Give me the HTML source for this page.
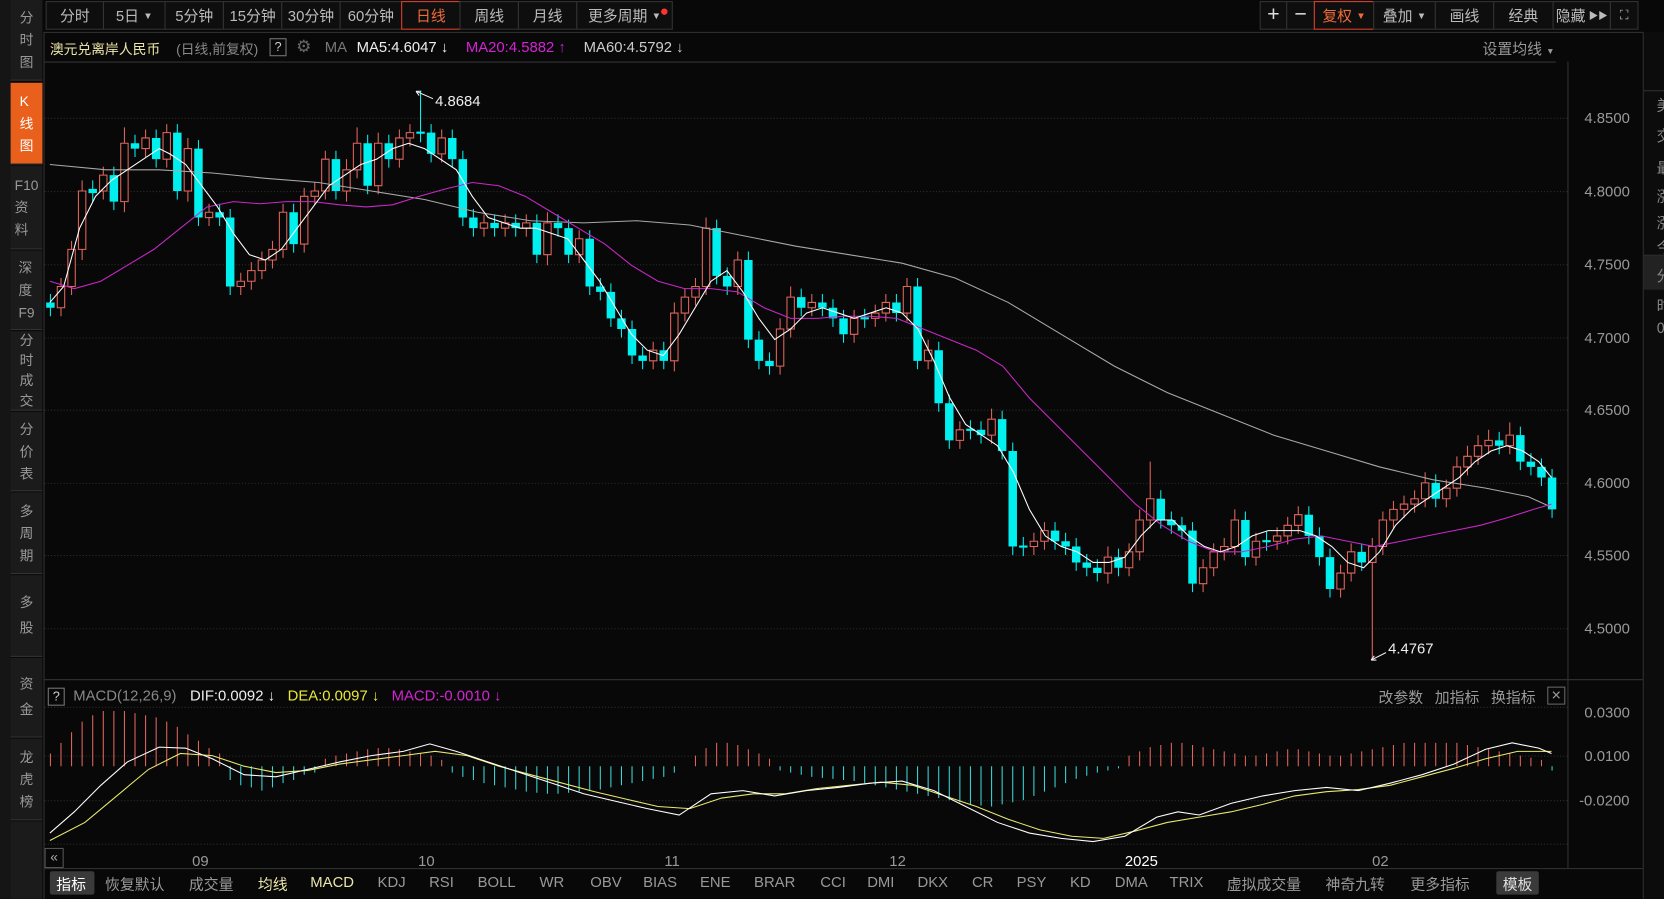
<!DOCTYPE html>
<html><head><meta charset="utf-8">
<style>
html,body{margin:0;padding:0;background:#000;width:1664px;height:899px;overflow:hidden}
#w{position:absolute;left:0;top:0;width:1568px;height:847px;transform:scale(1.06122);transform-origin:0 0;background:#080808;font-family:"Liberation Sans","Noto Sans CJK SC",sans-serif;color:#aaa;overflow:hidden}
.sb{position:absolute;left:0;top:0;width:10px;height:847px;background:#151515}
.side{position:absolute;left:10px;width:30px;background:#1b1b1b;border-bottom:1px solid #333;display:flex;flex-direction:column;align-items:center;justify-content:center;font-size:13px;line-height:21px;color:#999}
.side.on{background:#e8601c;color:#fff}
.tb{position:absolute;top:1px;height:27px;border:1px solid #333;background:#0e0e0e;color:#bbb;font-size:14px;display:flex;align-items:center;justify-content:center;box-sizing:border-box}
.tb.on{border-color:#e0402a;color:#f06a3a}
.t{position:absolute;white-space:nowrap;font-size:14px}
.ax{position:absolute;left:1493px;font-size:14px;color:#999}
.bt{position:absolute;top:823px;font-size:14px;color:#999;transform:translateX(-50%);white-space:nowrap}
</style></head><body>
<div id="w">
<div class="sb"></div>
<div class="side" style="top:0;height:75px">分<br>时<br>图</div>
<div class="side on" style="top:78px;height:76px">K<br>线<br>图</div>
<div class="side" style="top:156px;height:78px">F10<br>资<br>料</div>
<div class="side" style="top:236px;height:74px">深<br>度<br>F9</div>
<div class="side" style="top:312px;height:74px;line-height:19px">分<br>时<br>成<br>交</div>
<div class="side" style="top:388px;height:74px">分<br>价<br>表</div>
<div class="side" style="top:464px;height:76px">多<br>周<br>期</div>
<div class="side" style="top:542px;height:76px;line-height:24px">多<br>股</div>
<div class="side" style="top:620px;height:74px;line-height:24px">资<br>金</div>
<div class="side" style="top:696px;height:76px">龙<br>虎<br>榜</div>
<div class="side" style="top:774px;height:73px;border:none"></div>

<div class="tb" style="left:43px;width:55px">分时</div>
<div class="tb" style="left:97px;width:59px">5日 <span style="font-size:9px;margin-left:4px">▼</span></div>
<div class="tb" style="left:155px;width:56px">5分钟</div>
<div class="tb" style="left:210px;width:56px">15分钟</div>
<div class="tb" style="left:265px;width:56px">30分钟</div>
<div class="tb" style="left:320px;width:59px">60分钟</div>
<div class="tb on" style="left:378px;width:56px">日线</div>
<div class="tb" style="left:433px;width:56px">周线</div>
<div class="tb" style="left:488px;width:56px">月线</div>
<div class="tb" style="left:543px;width:91px">更多周期 <span style="font-size:9px;margin-left:4px">▼</span><span style="position:absolute;right:4px;top:6px;width:6px;height:6px;border-radius:3px;background:#f33"></span></div>

<div class="tb" style="left:1187px;width:26px;font-size:20px;color:#ddd">+</div>
<div class="tb" style="left:1212px;width:27px;font-size:20px;color:#ddd">−</div>
<div class="tb on" style="left:1238px;width:57px">复权 <span style="font-size:9px;margin-left:4px">▼</span></div>
<div class="tb" style="left:1294px;width:59px">叠加 <span style="font-size:9px;margin-left:4px">▼</span></div>
<div class="tb" style="left:1352px;width:56px">画线</div>
<div class="tb" style="left:1407px;width:57px">经典</div>
<div class="tb" style="left:1463px;width:55px">隐藏 <span style="font-size:9px;margin-left:3px">▶▶</span></div>
<div class="tb" style="left:1517px;width:27px;font-size:12px">⛶</div>

<div class="t" style="left:47px;top:36px;font-size:13px;color:#ece6a8">澳元兑离岸人民币</div>
<div class="t" style="left:166px;top:36px;font-size:13px;color:#888">(日线,前复权)</div>
<div class="t" style="left:254px;top:36px;width:14px;height:15px;border:1px solid #777;font-size:12px;color:#ccc;text-align:center;line-height:15px">?</div>
<div class="t" style="left:279px;top:34px;font-size:16px;color:#666">⚙</div>
<div class="t" style="left:306px;top:36px;font-size:14px;color:#777">MA</div>
<div class="t" style="left:336px;top:36px;font-size:14px;color:#eee">MA5:4.6047 ↓</div>
<div class="t" style="left:439px;top:36px;font-size:14px;color:#d324d3">MA20:4.5882 ↑</div>
<div class="t" style="left:550px;top:36px;font-size:14px;color:#ccc">MA60:4.5792 ↓</div>
<div class="t" style="left:1397px;top:36px;color:#999">设置均线 <span style="font-size:8px">▼</span></div>

<div class="ax" style="top:103px">4.8500</div>
<div class="ax" style="top:172px">4.8000</div>
<div class="ax" style="top:241px">4.7500</div>
<div class="ax" style="top:310px">4.7000</div>
<div class="ax" style="top:378px">4.6500</div>
<div class="ax" style="top:447px">4.6000</div>
<div class="ax" style="top:515px">4.5500</div>
<div class="ax" style="top:584px">4.5000</div>
<div class="ax" style="top:663px">0.0300</div>
<div class="ax" style="top:704px">0.0100</div>
<div class="ax" style="top:746px;left:1488px">-0.0200</div>

<div class="t" style="left:45px;top:648px;width:14px;height:15px;border:1px solid #777;font-size:12px;color:#ccc;text-align:center;line-height:15px">?</div>
<div class="t" style="left:69px;top:647px;color:#888">MACD(12,26,9)</div>
<div class="t" style="left:179px;top:647px;color:#eee">DIF:0.0092 ↓</div>
<div class="t" style="left:271px;top:647px;color:#e8e838">DEA:0.0097 ↓</div>
<div class="t" style="left:369px;top:647px;color:#d324d3">MACD:-0.0010 ↓</div>
<div class="t" style="left:1299px;top:647px;color:#999">改参数</div>
<div class="t" style="left:1352px;top:647px;color:#999">加指标</div>
<div class="t" style="left:1405px;top:647px;color:#999">换指标</div>
<div class="t" style="left:1458px;top:647px;width:15px;height:15px;border:1px solid #666;font-size:12px;color:#999;text-align:center;line-height:15px">✕</div>

<div class="t" style="left:42px;top:799px;width:16px;height:17px;border:1px solid #555;font-size:13px;line-height:16px;text-align:center;color:#aaa">«</div>
<div class="t" style="left:181px;top:803px;color:#999">09</div>
<div class="t" style="left:394px;top:803px;color:#999">10</div>
<div class="t" style="left:626px;top:803px;color:#999">11</div>
<div class="t" style="left:838px;top:803px;color:#999">12</div>
<div class="t" style="left:1060px;top:803px;color:#fff">2025</div>
<div class="t" style="left:1293px;top:803px;color:#999">02</div>

<div style="position:absolute;left:47px;top:821px;width:42px;height:22px;background:#3a3a3a;border-radius:2px"></div>
<div style="position:absolute;left:1410px;top:821px;width:40px;height:22px;background:#3a3a3a;border-radius:2px"></div>
<div class="bt" style="left:67px;color:#fff">指标</div>
<div class="bt" style="left:127px">恢复默认</div>
<div class="bt" style="left:199px">成交量</div>
<div class="bt" style="left:257px;color:#ece6a8">均线</div>
<div class="bt" style="left:313px;color:#ece6a8">MACD</div>
<div class="bt" style="left:369px">KDJ</div>
<div class="bt" style="left:416px">RSI</div>
<div class="bt" style="left:468px">BOLL</div>
<div class="bt" style="left:520px">WR</div>
<div class="bt" style="left:571px">OBV</div>
<div class="bt" style="left:622px">BIAS</div>
<div class="bt" style="left:674px">ENE</div>
<div class="bt" style="left:730px">BRAR</div>
<div class="bt" style="left:785px">CCI</div>
<div class="bt" style="left:830px">DMI</div>
<div class="bt" style="left:879px">DKX</div>
<div class="bt" style="left:926px">CR</div>
<div class="bt" style="left:972px">PSY</div>
<div class="bt" style="left:1018px">KD</div>
<div class="bt" style="left:1066px">DMA</div>
<div class="bt" style="left:1118px">TRIX</div>
<div class="bt" style="left:1191px">虚拟成交量</div>
<div class="bt" style="left:1277px">神奇九转</div>
<div class="bt" style="left:1357px">更多指标</div>
<div class="bt" style="left:1430px;color:#ddd">模板</div>

<svg width="1568" height="847" style="position:absolute;left:0;top:0" xmlns="http://www.w3.org/2000/svg">
<g stroke="#333" stroke-width="1" fill="none">
<line x1="42" y1="30.5" x2="1548" y2="30.5"/>
<line x1="42" y1="58.5" x2="1466" y2="58.5"/>
<line x1="42" y1="640.5" x2="1548" y2="640.5"/>
<line x1="42" y1="818.5" x2="1548" y2="818.5"/>
<line x1="1477.5" y1="58" x2="1477.5" y2="818"/>
<line x1="1548.5" y1="30" x2="1548.5" y2="847"/>
<line x1="41.5" y1="30" x2="41.5" y2="847"/>
</g>
<g stroke="#2e2e2e" stroke-dasharray="1,2" stroke-width="1">
<line x1="42" y1="111.5" x2="1477" y2="111.5"/><line x1="42" y1="180.5" x2="1477" y2="180.5"/>
<line x1="42" y1="249.5" x2="1477" y2="249.5"/><line x1="42" y1="318.5" x2="1477" y2="318.5"/>
<line x1="42" y1="386.5" x2="1477" y2="386.5"/><line x1="42" y1="455.5" x2="1477" y2="455.5"/>
<line x1="42" y1="523.5" x2="1477" y2="523.5"/><line x1="42" y1="592.5" x2="1477" y2="592.5"/>
<line x1="42" y1="666.5" x2="1477" y2="666.5"/><line x1="42" y1="712.5" x2="1477" y2="712.5"/>
<line x1="42" y1="754.5" x2="1477" y2="754.5"/><line x1="42" y1="795.5" x2="1477" y2="795.5"/>
</g>
<rect x="1549" y="30" width="19" height="817" fill="#0c0c0c"/>
<line x1="1549" y1="85.5" x2="1568" y2="85.5" stroke="#333"/>
<line x1="1549" y1="240.5" x2="1568" y2="240.5" stroke="#333"/>
<rect x="1549" y="241" width="19" height="32" fill="#222"/>
<g fill="#888" font-size="14" font-family="Noto Sans CJK SC,sans-serif">
<text x="1561" y="104">美</text><text x="1561" y="133">交</text><text x="1561" y="163">最</text><text x="1561" y="190">涨</text><text x="1561" y="215">涨</text><text x="1561" y="238">今</text><text x="1561" y="265">分</text><text x="1561" y="293">时</text><text x="1561" y="314">0</text>
</g>

<g transform="translate(47.5 0) scale(0.9965 1)" stroke-width="1">
<!-- MACD histogram -->
<path fill="none" stroke="#e2655c" d="M0 722V710M10 722V700M20 722V690M30 722V680M40 722V674M50 722V670M60 722V670M70 722V670M80 722V672M90 722V674M100 722V676M110 722V680M120 722V685M130 722V692M140 722V698M150 722V705M160 722V710M260 722V715M270 722V712M280 722V710M290 722V708M300 722V706M310 722V705M320 722V705M330 722V706M340 722V708M350 722V710M360 722V712M370 722V716M610 722V712M620 722V705M630 722V700M640 722V700M650 722V702M660 722V706M670 722V710M680 722V715M1020 722V712M1030 722V708M1040 722V704M1050 722V702M1060 722V700M1070 722V700M1080 722V702M1090 722V704M1100 722V706M1110 722V708M1120 722V710M1130 722V712M1140 722V712M1150 722V710M1160 722V708M1170 722V706M1180 722V706M1190 722V708M1200 722V710M1210 722V712M1220 722V712M1230 722V710M1240 722V708M1250 722V706M1260 722V704M1270 722V702M1280 722V700M1290 722V700M1300 722V700M1310 722V700M1320 722V700M1330 722V700M1340 722V702M1350 722V704M1360 722V706M1370 722V708M1380 722V710M1390 722V712M1400 722V714M1410 722V716"/>
<path fill="none" stroke="#3ad6d6" d="M170 722V735M180 722V740M190 722V742M200 722V745M210 722V742M220 722V738M230 722V735M240 722V730M250 722V728M380 722V728M390 722V732M400 722V735M410 722V738M420 722V740M430 722V742M440 722V744M450 722V746M460 722V747M470 722V748M480 722V748M490 722V747M500 722V746M510 722V745M520 722V744M530 722V742M540 722V740M550 722V738M560 722V736M570 722V734M580 722V732M590 722V728M690 722V726M700 722V728M710 722V730M720 722V732M730 722V733M740 722V734M750 722V735M760 722V736M770 722V738M780 722V740M790 722V742M800 722V744M810 722V746M820 722V748M830 722V750M840 722V752M850 722V754M860 722V756M870 722V758M880 722V759M890 722V760M900 722V758M910 722V756M920 722V754M930 722V750M940 722V746M950 722V742M960 722V738M970 722V734M980 722V731M990 722V728M1000 722V726M1010 722V724M1420 722V726"/>

<!-- wicks -->
<path fill="none" stroke="#e2655c" d="M10 262V298M20 227V278M30 170V245M50 157V188M70 120V200M90 122V148M110 117V158M130 130V190M150 192V213M180 257V278M190 247V273M200 237V263M210 227V253M220 192V243M240 177V238M250 172V193M260 142V188M280 150V190M290 120V168M310 125V183M330 122V158M340 117V138M370 122V153M410 202V223M430 202V223M450 202V223M470 200V250M500 217V248M570 322V348M590 285V350M600 272V303M610 262V288M620 205V278M650 237V278M690 300V353M700 270V318M720 277V298M760 292V323M780 287V308M790 277V303M810 262V303M830 320V348M860 397V423M890 385V418M930 502V523M940 492V518M1000 515V550M1020 512V543M1030 480V528M1040 435V498M1090 527V558M1100 512V543M1110 507V528M1120 480V523M1140 502V533M1160 497V518M1170 487V513M1180 477V503M1220 532V563M1230 512V548M1250 507V622M1260 482V523M1270 472V498M1280 467V488M1290 462V483M1300 445V478M1320 452V478M1330 430V468M1340 420V448M1350 410V438M1360 405V428M1380 398V428"/>
<path fill="none" stroke="#00f0f0" d="M0 277V298M40 170V190M60 157V198M80 127V148M100 122V158M120 117V188M140 132V213M160 192V213M170 197V278M230 192V238M270 142V188M300 127V183M320 127V158M350 86V134M360 117V153M380 122V158M390 142V213M400 197V223M420 202V223M440 202V223M460 202V248M480 202V223M490 207V248M510 217V278M520 262V283M530 267V308M540 292V318M550 302V343M560 327V348M580 322V348M630 207V268M640 252V278M660 237V328M670 312V348M680 332V353M710 272V298M730 277V298M740 282V308M750 292V323M770 291V309M800 277V303M820 262V348M840 322V388M850 372V423M870 396V414M880 397V418M900 387V433M910 417V523M920 506V524M950 492V518M960 502V523M970 507V538M980 522V543M990 527V548M1010 517V543M1050 462V498M1060 482V503M1070 487V508M1080 492V558M1130 482V533M1150 501V519M1190 477V513M1200 497V533M1210 517V563M1240 512V538M1310 447V478M1370 407V428M1390 402V443M1400 427V448M1410 432V458M1420 442V488"/>

<!-- bodies -->
<path fill="#00f0f0" d="M-4 285h8V290h-8zM36 178h8V182h-8zM56 165h8V190h-8zM76 135h8V140h-8zM96 130h8V150h-8zM116 125h8V180h-8zM136 140h8V205h-8zM156 200h8V205h-8zM166 205h8V270h-8zM226 200h8V230h-8zM266 150h8V180h-8zM296 135h8V175h-8zM316 135h8V150h-8zM346 124h8V126h-8zM356 125h8V145h-8zM376 130h8V150h-8zM386 150h8V205h-8zM396 205h8V215h-8zM416 210h8V215h-8zM436 210h8V215h-8zM456 210h8V240h-8zM476 210h8V215h-8zM486 215h8V240h-8zM506 225h8V270h-8zM516 270h8V275h-8zM526 275h8V300h-8zM536 300h8V310h-8zM546 310h8V335h-8zM556 335h8V340h-8zM576 330h8V340h-8zM626 215h8V260h-8zM636 260h8V270h-8zM656 245h8V320h-8zM666 320h8V340h-8zM676 340h8V345h-8zM706 280h8V290h-8zM726 285h8V290h-8zM736 290h8V300h-8zM746 300h8V315h-8zM766 299h8V301h-8zM796 285h8V295h-8zM816 270h8V340h-8zM836 330h8V380h-8zM846 380h8V415h-8zM866 404h8V406h-8zM876 405h8V410h-8zM896 395h8V425h-8zM906 425h8V515h-8zM916 514h8V516h-8zM946 500h8V510h-8zM956 510h8V515h-8zM966 515h8V530h-8zM976 530h8V535h-8zM986 535h8V540h-8zM1006 525h8V535h-8zM1046 470h8V490h-8zM1056 490h8V495h-8zM1066 495h8V500h-8zM1076 500h8V550h-8zM1126 490h8V525h-8zM1146 509h8V511h-8zM1186 485h8V505h-8zM1196 505h8V525h-8zM1206 525h8V555h-8zM1236 520h8V530h-8zM1306 455h8V470h-8zM1366 415h8V420h-8zM1386 410h8V435h-8zM1396 435h8V440h-8zM1406 440h8V450h-8zM1416 450h8V480h-8z"/>
<path fill="#080808" stroke="#e2655c" d="M6.5 270h7V290h-7zM16.5 235h7V270h-7zM26.5 180h7V235h-7zM46.5 165h7V180h-7zM66.5 135h7V190h-7zM86.5 130h7V140h-7zM106.5 125h7V150h-7zM126.5 140h7V180h-7zM146.5 200h7V205h-7zM176.5 265h7V270h-7zM186.5 255h7V265h-7zM196.5 245h7V255h-7zM206.5 235h7V245h-7zM216.5 200h7V235h-7zM236.5 185h7V230h-7zM246.5 180h7V185h-7zM256.5 150h7V180h-7zM276.5 160h7V180h-7zM286.5 135h7V160h-7zM306.5 135h7V175h-7zM326.5 130h7V150h-7zM336.5 125h7V130h-7zM366.5 130h7V145h-7zM406.5 210h7V215h-7zM426.5 210h7V215h-7zM446.5 210h7V215h-7zM466.5 210h7V240h-7zM496.5 225h7V240h-7zM566.5 330h7V340h-7zM586.5 295h7V340h-7zM596.5 280h7V295h-7zM606.5 270h7V280h-7zM616.5 215h7V270h-7zM646.5 245h7V270h-7zM686.5 310h7V345h-7zM696.5 280h7V310h-7zM716.5 285h7V290h-7zM756.5 300h7V315h-7zM776.5 295h7V300h-7zM786.5 285h7V295h-7zM806.5 270h7V295h-7zM826.5 330h7V340h-7zM856.5 405h7V415h-7zM886.5 395h7V410h-7zM926.5 510h7V515h-7zM936.5 500h7V510h-7zM996.5 525h7V540h-7zM1016.5 520h7V535h-7zM1026.5 490h7V520h-7zM1036.5 470h7V490h-7zM1086.5 535h7V550h-7zM1096.5 520h7V535h-7zM1106.5 515h7V520h-7zM1116.5 490h7V515h-7zM1136.5 510h7V525h-7zM1156.5 505h7V510h-7zM1166.5 495h7V505h-7zM1176.5 485h7V495h-7zM1216.5 540h7V555h-7zM1226.5 520h7V540h-7zM1246.5 515h7V530h-7zM1256.5 490h7V515h-7zM1266.5 480h7V490h-7zM1276.5 475h7V480h-7zM1286.5 470h7V475h-7zM1296.5 455h7V470h-7zM1316.5 460h7V470h-7zM1326.5 440h7V460h-7zM1336.5 430h7V440h-7zM1346.5 420h7V430h-7zM1356.5 415h7V420h-7zM1376.5 410h7V420h-7z"/>
</g>

<!-- MA lines -->
<polyline fill="none" stroke="#a8a8a8" points="47,155 100,160 150,160 200,163 250,168 300,172 350,180 400,188 450,200 500,208 550,210 600,208 650,212 700,222 750,232 800,240 850,248 900,262 950,285 1000,315 1050,345 1100,370 1150,390 1200,410 1250,425 1300,440 1350,452 1400,460 1440,468 1462,478"/>
<polyline fill="none" stroke="#c828c8" points="47,265 70,272 95,265 120,250 145,235 170,215 195,195 220,190 245,192 270,190 295,190 320,193 345,195 370,193 395,185 420,178 445,172 470,175 495,185 520,200 545,215 570,230 595,250 620,265 645,272 670,272 695,275 720,290 745,300 770,300 795,298 820,298 845,300 870,310 895,320 920,330 945,345 970,375 995,400 1020,425 1045,450 1070,475 1095,495 1120,510 1145,520 1170,520 1195,515 1220,508 1245,505 1270,510 1295,515 1320,510 1345,505 1370,500 1395,495 1420,488 1445,480 1462,475"/>
<polyline fill="none" stroke="#fff" points="47,285 60,270 75,215 90,185 105,170 120,160 135,150 150,140 160,145 175,155 190,175 205,195 220,220 235,240 250,245 265,235 280,215 295,195 310,175 325,165 340,155 355,150 370,140 385,135 400,140 415,150 430,160 445,185 460,205 475,210 490,215 505,215 520,220 535,225 550,245 565,265 580,290 595,315 610,330 625,335 640,315 655,290 670,265 685,255 700,275 715,300 730,320 745,310 760,295 775,290 790,295 805,300 820,295 835,290 850,295 865,310 880,340 895,375 910,400 925,410 940,420 955,445 970,480 985,505 1000,515 1015,520 1030,530 1045,530 1060,525 1075,505 1090,490 1105,490 1120,505 1135,515 1150,520 1165,515 1180,505 1195,500 1210,500 1225,500 1240,505 1255,515 1270,530 1285,535 1300,520 1315,495 1330,480 1345,470 1360,460 1375,450 1390,435 1405,425 1420,420 1435,425 1450,435 1462,450"/>

<!-- MACD lines -->
<polyline fill="none" stroke="#e8e870" points="47,792 80,775 110,750 140,725 170,710 200,712 230,722 260,728 290,726 320,720 350,716 380,712 410,708 440,712 470,722 500,730 530,738 560,746 590,753 620,760 650,762 680,752 710,748 740,748 770,743 800,740 830,737 860,740 890,750 920,760 950,772 980,782 1010,788 1040,790 1070,783 1100,775 1130,770 1160,765 1190,758 1220,750 1250,746 1280,744 1310,740 1340,732 1370,724 1400,715 1430,708 1462,708"/>
<polyline fill="none" stroke="#fff" points="47,785 70,765 95,740 120,718 150,704 175,705 200,715 230,730 260,732 290,725 320,718 350,712 380,708 405,701 430,708 460,718 490,728 520,738 550,748 580,755 610,762 640,768 670,748 700,745 730,750 760,745 790,742 820,738 850,736 880,745 910,760 940,775 970,785 1000,790 1030,793 1060,788 1090,770 1110,765 1130,768 1160,757 1190,750 1220,745 1250,742 1280,745 1310,738 1340,730 1370,720 1400,706 1425,700 1450,705 1462,710"/>

<text x="410" y="100" fill="#eee" font-size="14" font-family="Liberation Sans">4.8684</text>
<path d="M392 86 L408 93 M392 86 l5 0 M392 86 l3 4" stroke="#eee" fill="none"/>
<text x="1308" y="616" fill="#eee" font-size="14" font-family="Liberation Sans">4.4767</text>
<path d="M1292 622 L1306 615 M1292 622 l5 0 M1292 622 l3 -4" stroke="#eee" fill="none"/>
</svg>
</div>
</body></html>
